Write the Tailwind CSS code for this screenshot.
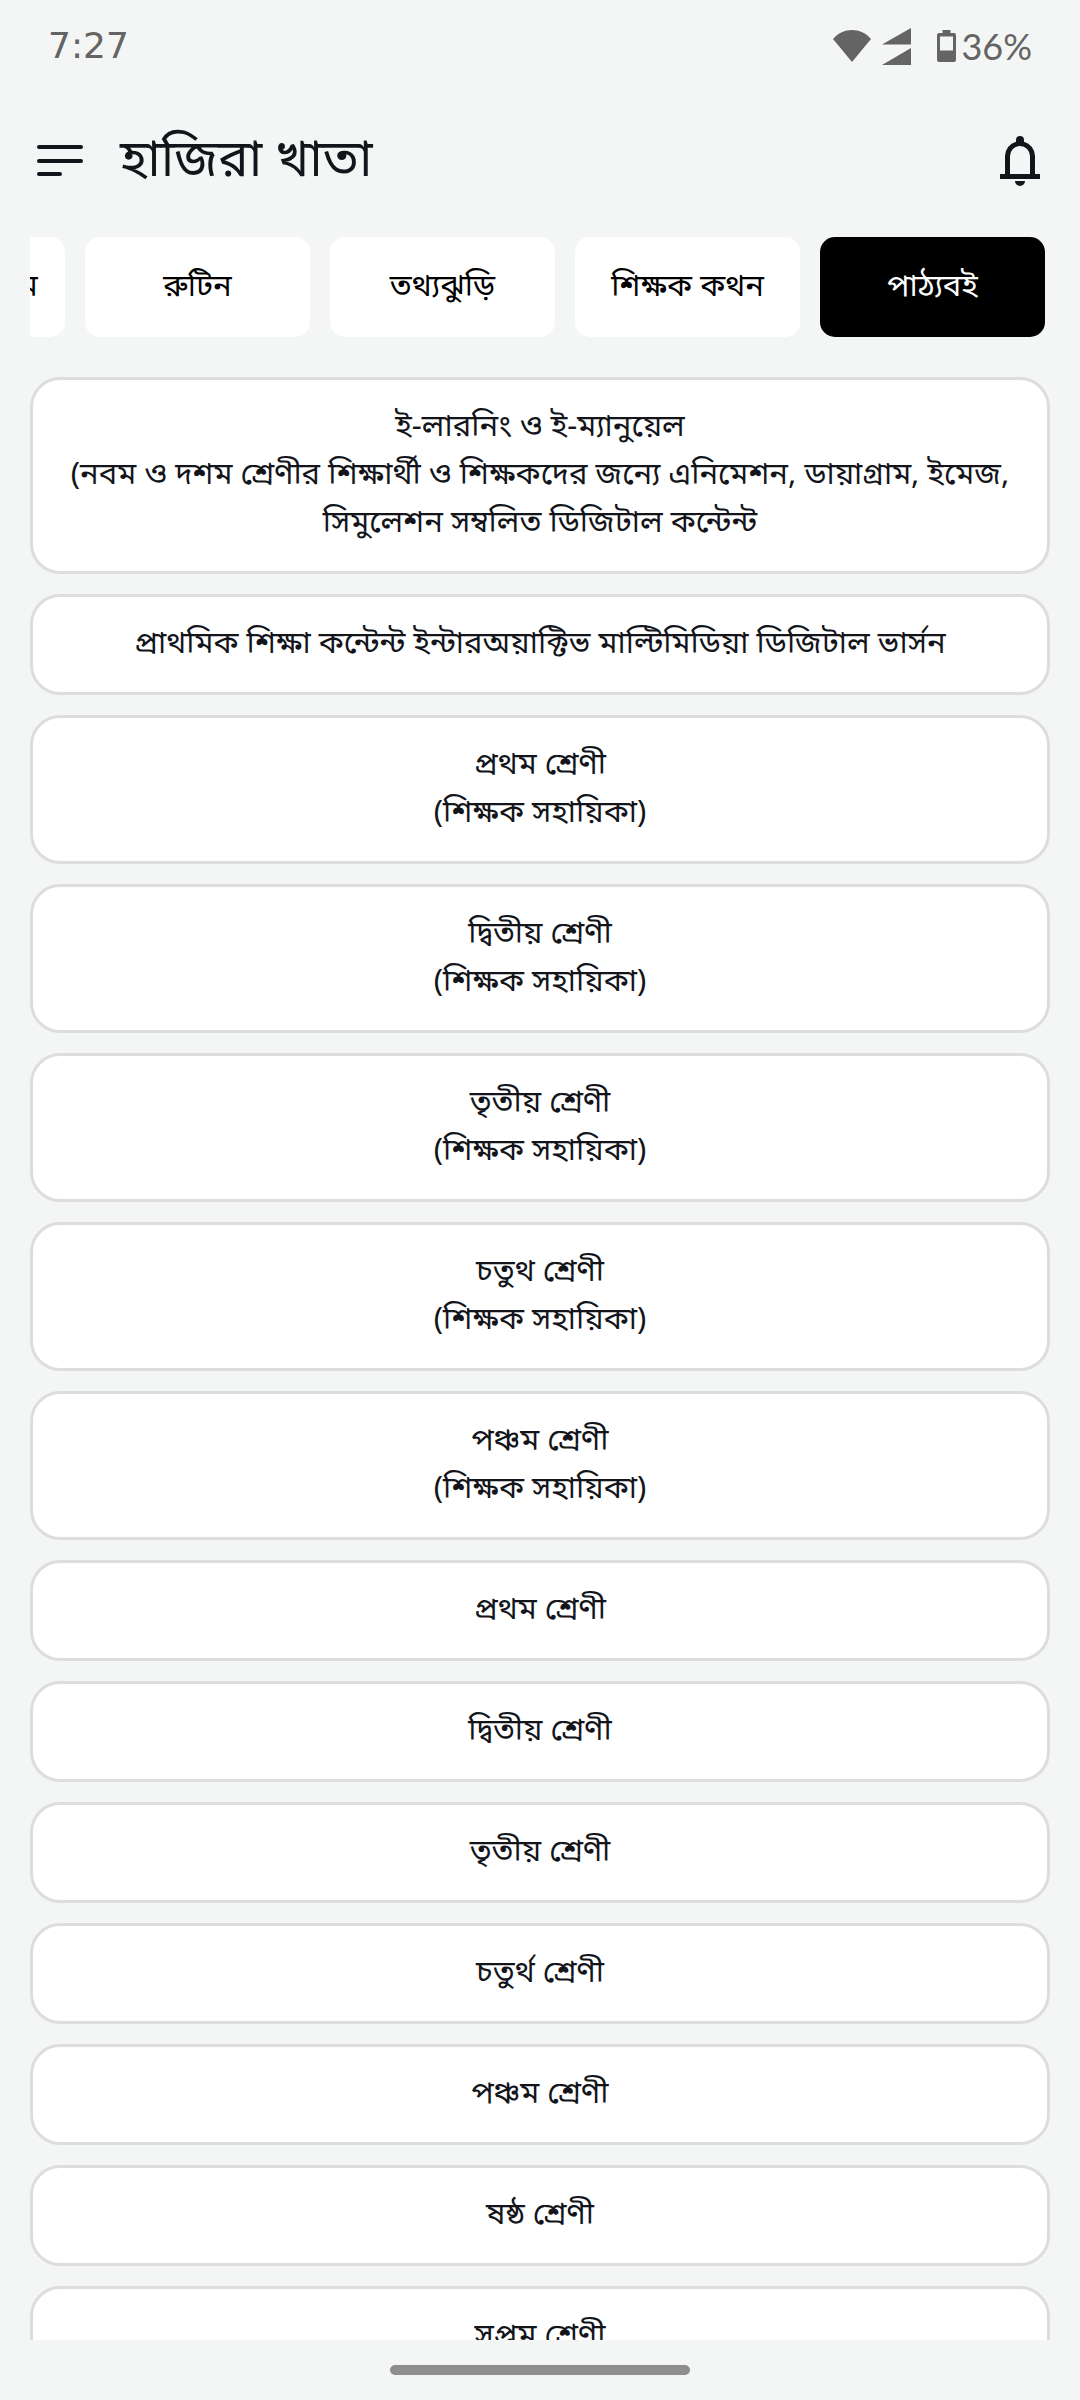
<!DOCTYPE html>
<html lang="bn">
  <head>
    <meta charset="UTF-8" />
    <meta name="viewport" content="width=device-width, initial-scale=1" />
    <title>হাজিরা খাতা</title>
    <script src="https://cdn.jsdelivr.net/npm/@tailwindcss/browser@4"></script>
  </head>

  <body
    class="h-screen flex flex-col overflow-hidden bg-[#f4f6f5] text-[#13151b] font-['Noto_Sans_Bengali','Noto_Sans',sans-serif]"
  >
    <!-- Status bar -->
    <div
      class="h-[92px] shrink-0 flex items-center justify-between px-12 text-[#646464] text-[36px] font-['Lato',sans-serif]"
    >
      <span class="font-['DejaVu_Sans',sans-serif]">7:27</span>
      <div class="flex items-center">
        <svg class="w-[38px] h-8 mr-[11px]" viewBox="0 0 38 32" fill="currentColor">
          <path d="M0 9C5 3 12 0 19 0s14 3 19 9L19 32z" />
        </svg>
        <svg class="w-[29px] h-[37px] mr-[26px]" viewBox="0 0 29 37" fill="currentColor">
          <path d="M29 0v16.500H0zM29 20v17H0z" />
        </svg>
        <svg class="w-[19px] h-8 mr-[5px]" viewBox="0 0 19 32" fill="currentColor" fill-rule="evenodd">
          <path d="M5.500 0h8v3H17a2 2 0 012 2v25a2 2 0 01-2 2H2a2 2 0 01-2-2V5a2 2 0 012-2h3.500zM3 6.500v14h13v-14z" />
        </svg>
        <span>36%</span>
      </div>
    </div>

    <!-- Header -->
    <header class="h-[141px] mb-1 shrink-0 flex items-center pl-9 pr-[30px]">
      <button type="button" aria-label="মেনু" class="w-12 h-12">
        <svg class="w-12 h-12" viewBox="0 0 48 48" fill="none" stroke="currentColor" stroke-width="4" stroke-linecap="round">
          <path d="M3 8h42M3 22h42M3 35h21" />
        </svg>
      </button>
      <h1 class="ml-9 grow text-[51px] leading-[72px]">হাজিরা খাতা</h1>
      <button type="button" aria-label="নোটিফিকেশন" class="w-[60px] h-[60px]">
        <svg class="w-[60px] h-[60px]" viewBox="0 0 60 60" fill="currentColor" fill-rule="evenodd">
          <path d="M30 3a4 4 0 014 4v1.700A15 15 0 0145 23v18h5v5H10v-5h5V23A15 15 0 0126 8.700V7a4 4 0 014-4zM20 23v18h20V23a10 10 0 00-20 0zM25 48h10a5 5 0 01-10 0z" />
        </svg>
      </button>
    </header>

    <!-- Tabs, scrolled to the last one -->
    <nav
      class="mx-[30px] shrink-0 flex justify-end gap-5 pr-[5px] overflow-hidden text-black text-[31px] leading-[48px]"
    >
      <button type="button" class="w-[225px] h-[100px] shrink-0 rounded-[15px] bg-white pt-1 whitespace-nowrap">শিক্ষা কার্যক্রম</button>
      <button type="button" class="w-[225px] h-[100px] shrink-0 rounded-[15px] bg-white pt-1">রুটিন</button>
      <button type="button" class="w-[225px] h-[100px] shrink-0 rounded-[15px] bg-white pt-1">তথ্যঝুড়ি</button>
      <button type="button" class="w-[225px] h-[100px] shrink-0 rounded-[15px] bg-white pt-1">শিক্ষক কথন</button>
      <button type="button" class="w-[225px] h-[100px] shrink-0 rounded-[15px] bg-black text-white pt-1">পাঠ্যবই</button>
    </nav>

    <!-- Book list -->
    <main
      class="mx-[30px] mt-10 grow min-h-0 overflow-hidden flex flex-col gap-5 text-[31px] leading-[48px]"
    >
      <button type="button" class="shrink-0 rounded-[30px] border-3 border-[#dcdddc] bg-white px-8 pt-[25px] pb-[22px]">
        ই-লারনিং ও ই-ম্যানুয়েল<br />(নবম ও দশম শ্রেণীর শিক্ষার্থী ও শিক্ষকদের জন্যে এনিমেশন, ডায়াগ্রাম, ইমেজ, সিমুলেশন সম্বলিত ডিজিটাল কন্টেন্ট
      </button>
      <button type="button" class="shrink-0 rounded-[30px] border-3 border-[#dcdddc] bg-white px-8 pt-[25px] pb-[22px]">
        প্রাথমিক শিক্ষা কন্টেন্ট ইন্টারঅয়াক্টিভ মাল্টিমিডিয়া ডিজিটাল ভার্সন
      </button>
      <button type="button" class="shrink-0 rounded-[30px] border-3 border-[#dcdddc] bg-white px-8 pt-[25px] pb-[22px]">
        প্রথম শ্রেণী<br />(শিক্ষক সহায়িকা)
      </button>
      <button type="button" class="shrink-0 rounded-[30px] border-3 border-[#dcdddc] bg-white px-8 pt-[25px] pb-[22px]">
        দ্বিতীয় শ্রেণী<br />(শিক্ষক সহায়িকা)
      </button>
      <button type="button" class="shrink-0 rounded-[30px] border-3 border-[#dcdddc] bg-white px-8 pt-[25px] pb-[22px]">
        তৃতীয় শ্রেণী<br />(শিক্ষক সহায়িকা)
      </button>
      <button type="button" class="shrink-0 rounded-[30px] border-3 border-[#dcdddc] bg-white px-8 pt-[25px] pb-[22px]">
        চতুথ শ্রেণী<br />(শিক্ষক সহায়িকা)
      </button>
      <button type="button" class="shrink-0 rounded-[30px] border-3 border-[#dcdddc] bg-white px-8 pt-[25px] pb-[22px]">
        পঞ্চম শ্রেণী<br />(শিক্ষক সহায়িকা)
      </button>
      <button type="button" class="shrink-0 rounded-[30px] border-3 border-[#dcdddc] bg-white px-8 pt-[25px] pb-[22px]">
        প্রথম শ্রেণী
      </button>
      <button type="button" class="shrink-0 rounded-[30px] border-3 border-[#dcdddc] bg-white px-8 pt-[25px] pb-[22px]">
        দ্বিতীয় শ্রেণী
      </button>
      <button type="button" class="shrink-0 rounded-[30px] border-3 border-[#dcdddc] bg-white px-8 pt-[25px] pb-[22px]">
        তৃতীয় শ্রেণী
      </button>
      <button type="button" class="shrink-0 rounded-[30px] border-3 border-[#dcdddc] bg-white px-8 pt-[25px] pb-[22px]">
        চতুর্থ শ্রেণী
      </button>
      <button type="button" class="shrink-0 rounded-[30px] border-3 border-[#dcdddc] bg-white px-8 pt-[25px] pb-[22px]">
        পঞ্চম শ্রেণী
      </button>
      <button type="button" class="shrink-0 rounded-[30px] border-3 border-[#dcdddc] bg-white px-8 pt-[25px] pb-[22px]">
        ষষ্ঠ শ্রেণী
      </button>
      <button type="button" class="shrink-0 rounded-[30px] border-3 border-[#dcdddc] bg-white px-8 pt-[25px] pb-[22px]">
        সপ্তম শ্রেণী
      </button>
    </main>

    <!-- Gesture bar -->
    <div class="h-[60px] shrink-0 flex items-center justify-center">
      <div class="w-[300px] h-[10px] rounded-full bg-[#8e8e8e]"></div>
    </div>
  </body>
</html>
